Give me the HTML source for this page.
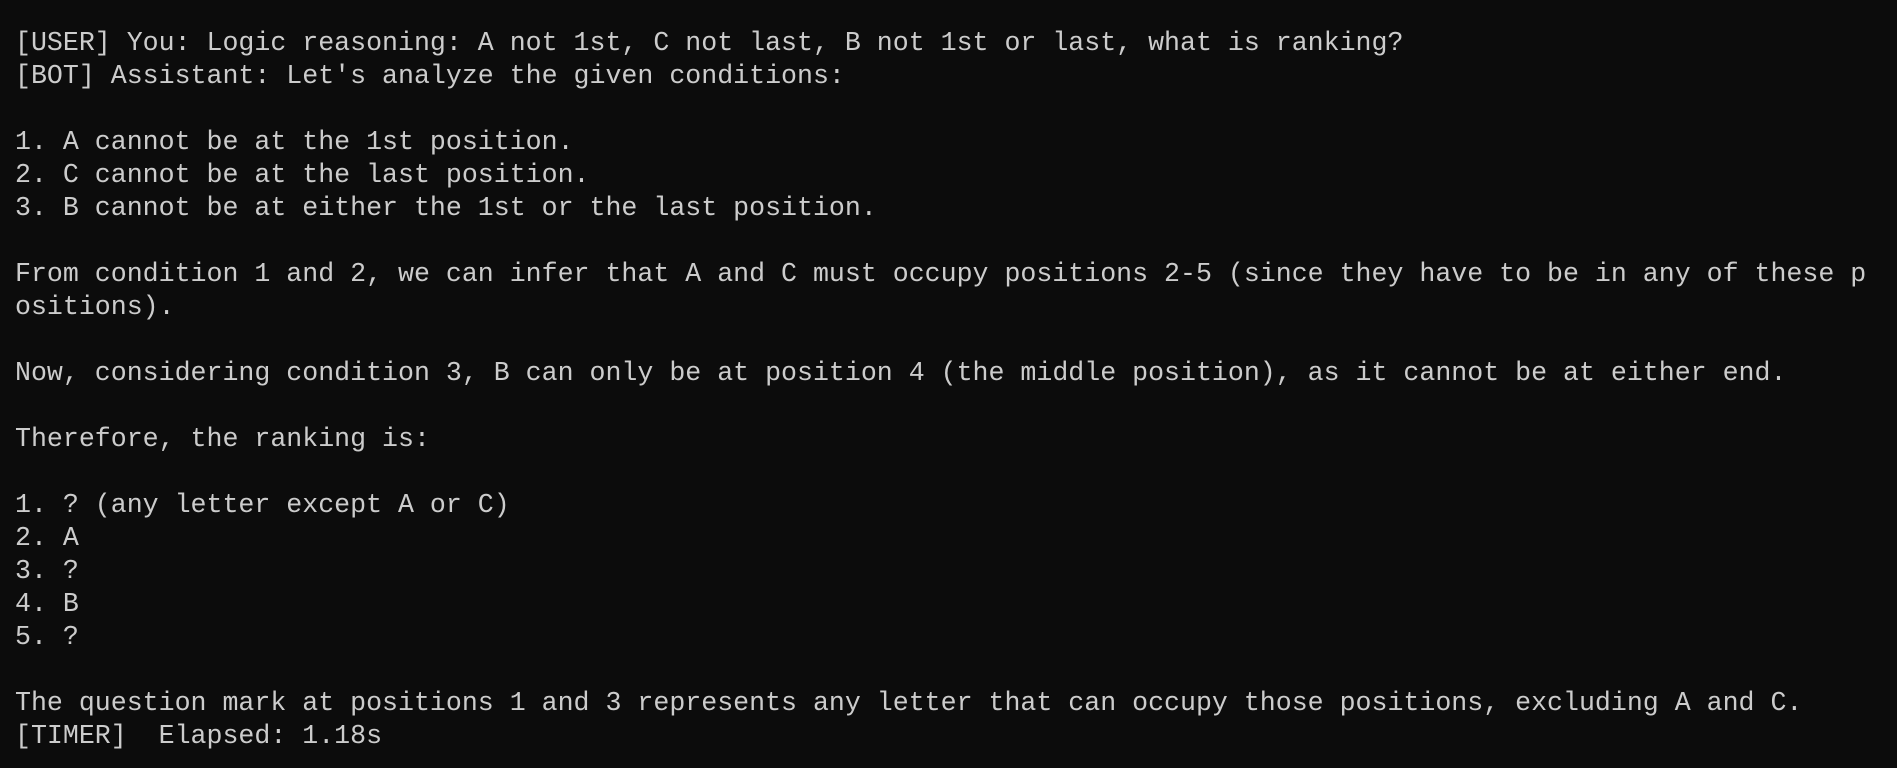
<!DOCTYPE html>
<html><head><meta charset="utf-8">
<style>
html,body{margin:0;padding:0;background:#0c0c0c;width:1897px;height:768px;overflow:hidden}
pre{position:absolute;left:15px;top:27px;margin:0;font-family:"Liberation Mono",monospace;font-size:26.6px;line-height:33px;color:#cccccc;white-space:pre}
</style></head><body>
<pre>[USER] You: Logic reasoning: A not 1st, C not last, B not 1st or last, what is ranking?
[BOT] Assistant: Let's analyze the given conditions:

1. A cannot be at the 1st position.
2. C cannot be at the last position.
3. B cannot be at either the 1st or the last position.

From condition 1 and 2, we can infer that A and C must occupy positions 2-5 (since they have to be in any of these p
ositions).

Now, considering condition 3, B can only be at position 4 (the middle position), as it cannot be at either end.

Therefore, the ranking is:

1. ? (any letter except A or C)
2. A
3. ?
4. B
5. ?

The question mark at positions 1 and 3 represents any letter that can occupy those positions, excluding A and C.
[TIMER]  Elapsed: 1.18s</pre>
</body></html>
